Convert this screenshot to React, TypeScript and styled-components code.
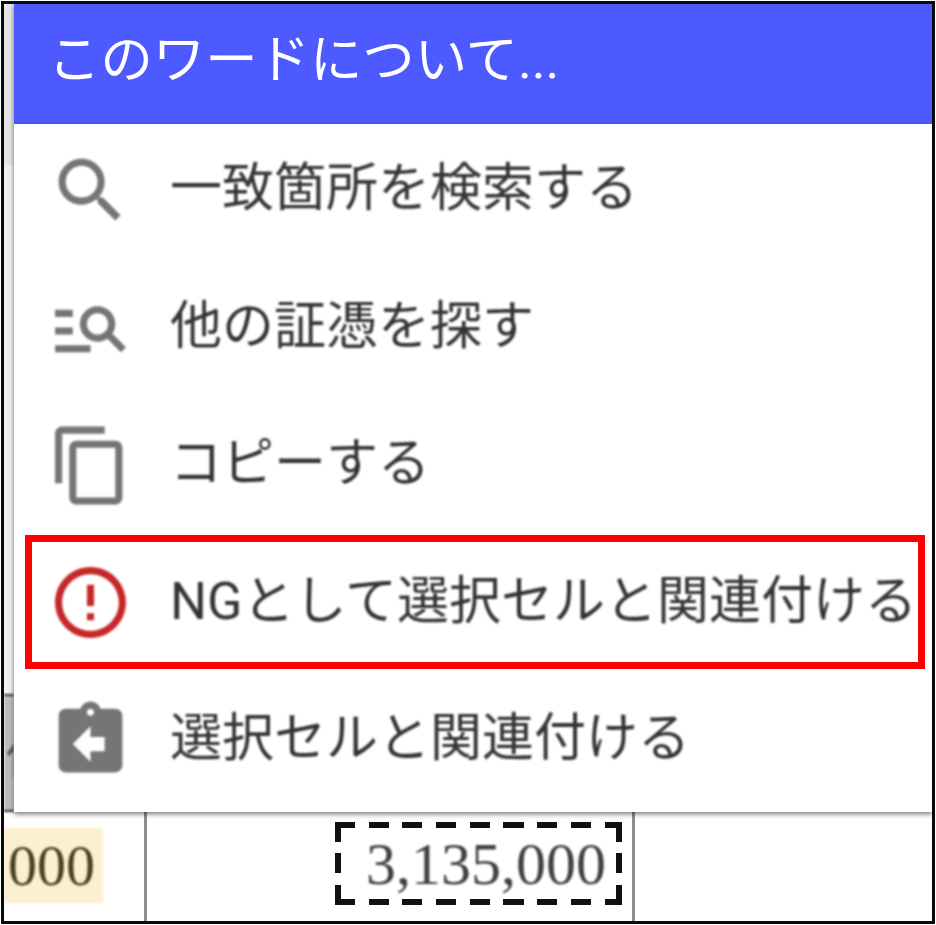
import React from "react";
import styled, { createGlobalStyle } from "styled-components";

const Global = createGlobalStyle`
  html, body { margin: 0; padding: 0; background: #fff; }
  #root { width: 936px; height: 925px; overflow: hidden; }
`;

const SANS = `Roboto, "Noto Sans CJK JP", "Noto Sans", sans-serif`;
const SERIF = `"Liberation Serif", serif`;

const Frame = styled.div`
  position: relative;
  box-sizing: border-box;
  width: 934px;
  height: 923px;
  margin: 1px;
  border: 3px solid #0a0a0a;
  background: #fff;
  overflow: hidden;
  display: flex;
  flex-direction: column;
`;

const Behind = styled.div`
  height: 808px;
  width: 10px;
  display: flex;
  flex-direction: column;
`;

const GutterTop = styled.div`
  height: 161px;
  background: #e6e6e4;
`;

const GutterRest = styled.div`
  flex: 1;
  background: #f2f2f2;
`;

const GutterCell = styled.div`
  box-sizing: border-box;
  height: 118px;
  background: #bdbdbd;
  border-top: 2px solid #333;
  border-bottom: 2px solid #333;
  overflow: hidden;
  display: flex;
  align-items: center;
  padding-left: 2px;
  color: #555;
  font: 48px ${SANS};
  white-space: nowrap;
  filter: blur(0.8px);
`;

const TableRow = styled.div`
  flex: 1;
  display: grid;
  grid-template-columns: 143px 488px 1fr;
`;

const Cell = styled.div<{ $line?: boolean }>`
  box-sizing: border-box;
  border-right: ${(p) => (p.$line ? "3px solid #8d8d8d" : "none")};
  display: flex;
  align-items: flex-start;
`;

const Highlighted = styled.div`
  margin-top: 16px;
  width: 99px;
  height: 75px;
  background: #fdf0d0;
  color: #4a4020;
  font: 58px/75px ${SERIF};
  text-align: right;
  padding-right: 8px;
  box-sizing: border-box;
  overflow: hidden;
  filter: blur(0.8px);
`;

const DashedBox = styled.div`
  box-sizing: border-box;
  margin: 10px 10px 0 auto;
  padding-left: 15px;
  width: 287px;
  height: 83px;
  display: flex;
  align-items: center;
  justify-content: center;
  color: #404040;
  font: 60px/1 ${SERIF};
  background:
    repeating-linear-gradient(90deg, #111 0 20px, transparent 20px 33.7px) top left / 100% 6px no-repeat,
    repeating-linear-gradient(90deg, #111 0 20px, transparent 20px 33.7px) bottom left / 100% 6px no-repeat,
    repeating-linear-gradient(180deg, #111 0 20px, transparent 20px 31.5px) top left / 6px 100% no-repeat,
    repeating-linear-gradient(180deg, #111 0 20px, transparent 20px 31.5px) top right / 6px 100% no-repeat;
`;

const Amount = styled.span`
  filter: blur(0.8px);
`;

const Menu = styled.div`
  position: absolute;
  top: 0;
  left: 10px;
  right: 0;
  height: 808px;
  background: #fff;
  box-shadow: 0 2px 5px rgba(0, 0, 0, 0.55);
  display: flex;
  flex-direction: column;
`;

const Header = styled.div`
  flex: none;
  box-sizing: border-box;
  height: 120px;
  padding: 0 0 6px 34px;
  background: #4c5aff;
  border-bottom: 2px solid #4352fb;
  color: #fff;
  display: flex;
  align-items: center;
  font: 400 52.4px/1 ${SANS};
  white-space: nowrap;
`;

const HeaderText = styled.span`
  filter: blur(0.7px);
`;

const Items = styled.div`
  flex: 1;
  display: flex;
  flex-direction: column;
  gap: 7.5px;
`;

const Item = styled.div<{ $flagged?: boolean }>`
  position: relative;
  flex: none;
  height: 130px;
  display: flex;
  align-items: center;
  padding-left: 34px;
  gap: 37px;
  white-space: nowrap;

  ${(p) =>
    p.$flagged &&
    `&::after {
      content: "";
      position: absolute;
      left: 11px;
      right: 7px;
      top: -2px;
      height: 134px;
      box-sizing: border-box;
      border: 7px solid #ff0000;
    }`}
`;

const Glyph = styled.svg<{ $danger?: boolean }>`
  flex: none;
  width: 85px;
  height: 85px;
  margin-top: 2px;
  fill: ${(p) => (p.$danger ? "#c62828" : "#757575")};
  filter: blur(0.8px);
`;

const Label = styled.span`
  color: rgba(0, 0, 0, 0.8);
  font: 400 52px/1 ${SANS};
  filter: blur(0.8px);
`;

const PATHS = {
  search:
    "M15.5 14h-.79l-.28-.27C15.41 12.59 16 11.11 16 9.5 16 5.91 13.09 3 9.5 3S3 5.91 3 9.5 5.91 16 9.5 16c1.61 0 3.09-.59 4.23-1.57l.27.28v.79l5 4.99L20.49 19l-4.99-5zm-6 0C7.01 14 5 11.99 5 9.5S7.01 5 9.5 5 14 7.01 14 9.5 11.99 14 9.5 14z",
  manage:
    "M7 9H2V7h5v2zm0 3H2v2h5v-2zm13.59 7l-3.83-3.83c-.8.52-1.74.83-2.76.83-2.76 0-5-2.24-5-5s2.24-5 5-5 5 2.24 5 5c0 1.02-.31 1.96-.83 2.75L22 17.59 20.59 19zM17 11c0-1.65-1.35-3-3-3s-3 1.35-3 3 1.35 3 3 3 3-1.35 3-3zM2 19h10v-2H2v2z",
  copy:
    "M16 1H4c-1.1 0-2 .9-2 2v14h2V3h12V1zm3 4H8c-1.1 0-2 .9-2 2v14c0 1.1.9 2 2 2h11c1.1 0 2-.9 2-2V7c0-1.1-.9-2-2-2zm0 16H8V7h11v14z",
  error:
    "M11 15h2v2h-2zm0-8h2v6h-2zm.99-5C6.47 2 2 6.48 2 12s4.47 10 9.99 10C17.52 22 22 17.52 22 12S17.52 2 11.99 2zM12 20c-4.42 0-8-3.58-8-8s3.58-8 8-8 8 3.58 8 8-3.58 8-8 8z",
  assign:
    "M19 3h-4.18C14.4 1.84 13.3 1 12 1c-1.3 0-2.4.84-2.82 2H5c-1.1 0-2 .9-2 2v14c0 1.1.9 2 2 2h14c1.1 0 2-.9 2-2V5c0-1.1-.9-2-2-2zm-7 0c.55 0 1 .45 1 1s-.45 1-1 1-1-.45-1-1 .45-1 1-1zm4 12h-4v3l-5-5 5-5v3h4v4z",
};

const ITEMS: { icon: keyof typeof PATHS; label: string; flagged?: boolean }[] = [
  { icon: "search", label: "一致箇所を検索する" },
  { icon: "manage", label: "他の証憑を探す" },
  { icon: "copy", label: "コピーする" },
  { icon: "error", label: "NGとして選択セルと関連付ける", flagged: true },
  { icon: "assign", label: "選択セルと関連付ける" },
];

export default function App() {
  return (
    <>
      <Global />
      <Frame>
        <Behind>
          <GutterTop />
          <GutterRest />
          <GutterCell>価</GutterCell>
        </Behind>
        <TableRow>
          <Cell $line>
            <Highlighted>000</Highlighted>
          </Cell>
          <Cell $line>
            <DashedBox>
              <Amount>3,135,000</Amount>
            </DashedBox>
          </Cell>
          <Cell />
        </TableRow>
        <Menu>
          <Header>
            <HeaderText>このワードについて...</HeaderText>
          </Header>
          <Items>
            {ITEMS.map((it) => (
              <Item key={it.label} $flagged={it.flagged}>
                <Glyph viewBox="0 0 24 24" $danger={it.flagged}>
                  <path d={PATHS[it.icon]} />
                </Glyph>
                <Label>{it.label}</Label>
              </Item>
            ))}
          </Items>
        </Menu>
      </Frame>
    </>
  );
}
